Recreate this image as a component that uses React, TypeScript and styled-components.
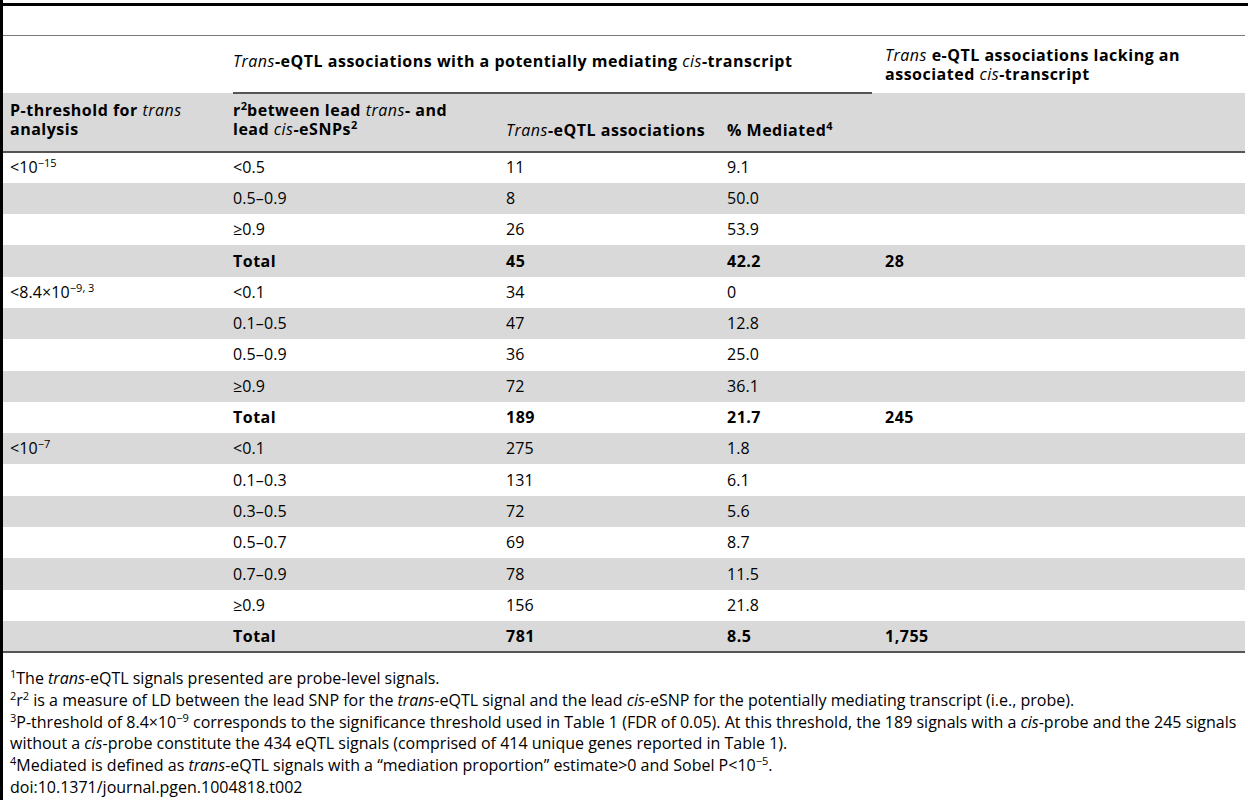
import React from "react";
import styled, { createGlobalStyle } from "styled-components";

const Global = createGlobalStyle`
  html, body { margin: 0; padding: 0; background: #fff; }
  body { font-family: "Open Sans", "DejaVu Sans", sans-serif; color: #000; }
`;

const Frame = styled.div`
  min-height: 100vh;
  box-sizing: border-box;
  border-left: 3px solid #000;
  padding-top: 3px;
`;

const TopRule = styled.div`
  height: 3px;
  background: #000;
`;

const Spacer = styled.div`
  height: 29px;
`;

const Table = styled.table`
  width: 1242px;
  border-collapse: collapse;
  table-layout: fixed;
  border-top: 1px solid #777;
  border-bottom: 2px solid #555;
  font-size: 16px;
  line-height: 19px;
`;

const Row = styled.tr<{ $shade?: boolean; $height: number; $rule?: boolean }>`
  height: ${(p) => p.$height}px;
  background: ${(p) => (p.$shade ? "#d9d9d9" : "#fff")};
  border-bottom: ${(p) => (p.$rule ? "2px solid #555" : "none")};
`;

const Cell = styled.td<{
  $bold?: boolean;
  $first?: boolean;
  $last?: boolean;
  $valign?: string;
  $underline?: boolean;
  $padTop?: number;
  $padBottom?: number;
}>`
  padding: ${(p) => p.$padTop ?? 0}px 4px ${(p) => p.$padBottom ?? 0}px
    ${(p) => (p.$first ? 7 : p.$last ? 13 : 0)}px;
  vertical-align: ${(p) => p.$valign ?? "middle"};
  font-weight: ${(p) => (p.$bold ? 700 : 400)};
  letter-spacing: ${(p) => (p.$bold ? "0.5px" : "0.1px")};
  border-bottom: ${(p) => (p.$underline ? "2px solid #555" : "none")};
  white-space: nowrap;
`;

const Em = styled.i`
  font-weight: 400;
`;

const Sup = styled.sup`
  font-size: 11px;
  line-height: 0;
  vertical-align: 6px;
  letter-spacing: 0;
`;

const Notes = styled.div`
  padding: 15px 0 0 7px;
  font-size: 16px;
  line-height: 21.7px;
`;

const Note = styled.div`
  white-space: nowrap;
`;

type Group = {
  threshold: React.ReactNode;
  rows: [string, string, string][];
  total: [string, string, string];
};

const groups: Group[] = [
  {
    threshold: (
      <>
        &lt;10<Sup>−15</Sup>
      </>
    ),
    rows: [
      ["<0.5", "11", "9.1"],
      ["0.5–0.9", "8", "50.0"],
      ["≥0.9", "26", "53.9"],
    ],
    total: ["45", "42.2", "28"],
  },
  {
    threshold: (
      <>
        &lt;8.4×10<Sup>−9, 3</Sup>
      </>
    ),
    rows: [
      ["<0.1", "34", "0"],
      ["0.1–0.5", "47", "12.8"],
      ["0.5–0.9", "36", "25.0"],
      ["≥0.9", "72", "36.1"],
    ],
    total: ["189", "21.7", "245"],
  },
  {
    threshold: (
      <>
        &lt;10<Sup>−7</Sup>
      </>
    ),
    rows: [
      ["<0.1", "275", "1.8"],
      ["0.1–0.3", "131", "6.1"],
      ["0.3–0.5", "72", "5.6"],
      ["0.5–0.7", "69", "8.7"],
      ["0.7–0.9", "78", "11.5"],
      ["≥0.9", "156", "21.8"],
    ],
    total: ["781", "8.5", "1,755"],
  },
];

export default function App() {
  let idx = 0;
  const body: React.ReactNode[] = [];
  groups.forEach((g, gi) => {
    g.rows.forEach((r, ri) => {
      const shade = idx % 2 === 1;
      idx++;
      body.push(
        <Row key={`${gi}-${ri}`} $height={31.3} $shade={shade}>
          <Cell $first>{ri === 0 ? g.threshold : null}</Cell>
          <Cell>{r[0]}</Cell>
          <Cell>{r[1]}</Cell>
          <Cell>{r[2]}</Cell>
          <Cell $last />
        </Row>
      );
    });
    const shade = idx % 2 === 1;
    idx++;
    body.push(
      <Row key={`${gi}-t`} $height={31.3} $shade={shade}>
        <Cell $first />
        <Cell $bold>Total</Cell>
        <Cell $bold>{g.total[0]}</Cell>
        <Cell $bold>{g.total[1]}</Cell>
        <Cell $bold $last>
          {g.total[2]}
        </Cell>
      </Row>
    );
  });

  return (
    <>
      <Global />
      <Frame>
        <TopRule />
        <Spacer />
        <Table>
          <colgroup>
            <col style={{ width: 230 }} />
            <col style={{ width: 273 }} />
            <col style={{ width: 221 }} />
            <col style={{ width: 145 }} />
            <col style={{ width: 373 }} />
          </colgroup>
          <thead>
            <Row $height={57}>
              <Cell $first />
              <Cell colSpan={3} $bold $valign="top" $padTop={16} $underline>
                <Em>Trans</Em>-eQTL associations with a potentially mediating <Em>cis</Em>-transcript
              </Cell>
              <Cell $bold $last $valign="top" $padTop={10}>
                <Em>Trans</Em> e-QTL associations lacking an
                <br />
                associated <Em>cis</Em>-transcript
              </Cell>
            </Row>
            <Row $height={59} $shade $rule>
              <Cell $first $bold $valign="bottom" $padBottom={12}>
                P-threshold for <Em>trans</Em>
                <br />
                analysis
              </Cell>
              <Cell $bold $valign="bottom" $padBottom={12}>
                r<Sup>2</Sup>between lead <Em>trans</Em>- and
                <br />
                lead <Em>cis</Em>-eSNPs<Sup>2</Sup>
              </Cell>
              <Cell $bold $valign="bottom" $padBottom={11}>
                <Em>Trans</Em>-eQTL associations
              </Cell>
              <Cell $bold $valign="bottom" $padBottom={11}>
                % Mediated<Sup>4</Sup>
              </Cell>
              <Cell $last />
            </Row>
          </thead>
          <tbody>{body}</tbody>
        </Table>
        <Notes>
          <Note>
            <Sup>1</Sup>The <i>trans</i>-eQTL signals presented are probe-level signals.
          </Note>
          <Note>
            <Sup>2</Sup>r<Sup>2</Sup> is a measure of LD between the lead SNP for the <i>trans</i>-eQTL signal and the
            lead <i>cis</i>-eSNP for the potentially mediating transcript (i.e., probe).
          </Note>
          <Note>
            <Sup>3</Sup>P-threshold of 8.4×10<Sup>−9</Sup> corresponds to the significance threshold used in Table 1
            (FDR of 0.05). At this threshold, the 189 signals with a <i>cis</i>-probe and the 245 signals
            <br />
            without a <i>cis</i>-probe constitute the 434 eQTL signals (comprised of 414 unique genes reported in Table
            1).
          </Note>
          <Note>
            <Sup>4</Sup>Mediated is defined as <i>trans</i>-eQTL signals with a “mediation proportion” estimate&gt;0
            and Sobel P&lt;10<Sup>−5</Sup>.
          </Note>
          <Note>doi:10.1371/journal.pgen.1004818.t002</Note>
        </Notes>
      </Frame>
    </>
  );
}
